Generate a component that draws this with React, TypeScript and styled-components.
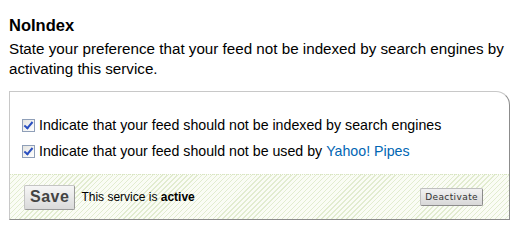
import React from "react";
import styled, { createGlobalStyle } from "styled-components";

const GlobalStyle = createGlobalStyle`
  html, body {
    margin: 0;
    padding: 0;
    background: #ffffff;
  }
  body {
    font-family: "Liberation Sans", Arial, sans-serif;
    color: #000;
  }
`;

function App() {
  return (
    <Page>
      <GlobalStyle />
      <Title>NoIndex</Title>
      <Description>
        State your preference that your feed not be indexed by search engines by
        activating this service.
      </Description>
      <Panel>
        <Options>
          <OptionRow>
            <Checkbox type="checkbox" defaultChecked />
            Indicate that your feed should not be indexed by search engines
          </OptionRow>
          <OptionRow>
            <Checkbox type="checkbox" defaultChecked />
            Indicate that your feed should not be used by
            <Link href="#">Yahoo! Pipes</Link>
          </OptionRow>
        </Options>
        <Footer>
          <SaveButton type="button">Save</SaveButton>
          <Status>
            This service is <b>active</b>
          </Status>
          <DeactivateButton type="button">Deactivate</DeactivateButton>
        </Footer>
      </Panel>
    </Page>
  );
}

const Page = styled.div`
  padding: 15px 8px 0 9px;
  width: 517px;
  box-sizing: border-box;
`;

const Title = styled.h2`
  margin: 0;
  font-size: 16.5px;
  font-weight: bold;
  line-height: 20px;
`;

const Description = styled.p`
  margin: 4px 0 0;
  font-size: 15.2px;
  line-height: 20px;
`;

const Panel = styled.div`
  margin-top: 12px;
  width: 501px;
  box-sizing: border-box;
  border: 1px solid #c8c8c8;
  border-right-color: #8c8c8c;
  border-bottom-color: #8c8c8c;
  border-top-right-radius: 14px;
  overflow: hidden;
`;

const Options = styled.div`
  display: flex;
  flex-direction: column;
  gap: 6px;
  padding: 23px 12px 13px;
`;

const OptionRow = styled.label`
  display: flex;
  align-items: center;
  font-size: 14.2px;
  line-height: 20px;
  white-space: nowrap;
`;

const Checkbox = styled.input`
  appearance: none;
  position: relative;
  width: 13px;
  height: 13px;
  margin: 0 4px 0 0;
  border: 1px solid #8f9fb8;
  background: linear-gradient(135deg, #e4e4e0, #ffffff);
  box-sizing: border-box;

  &:checked::after {
    content: "";
    position: absolute;
    left: 3px;
    top: 0px;
    width: 3px;
    height: 7px;
    border: solid #2a4fc0;
    border-width: 0 2px 2px 0;
    transform: rotate(40deg);
  }
`;

const Link = styled.a`
  color: #0066b3;
  text-decoration: none;
  margin-left: 4px;
`;

const Footer = styled.div`
  display: flex;
  align-items: center;
  height: 44px;
  padding: 0 26px 0 14px;
  border-top: 1px dotted #d8e4c0;
  background: repeating-linear-gradient(
    -45deg,
    #fafcf5 0px,
    #fafcf5 2.5px,
    #e2ecd0 2.5px,
    #e2ecd0 3.5px
  );
`;

const SaveButton = styled.button`
  font-family: "Liberation Sans", Arial, sans-serif;
  font-size: 16px;
  font-weight: bold;
  color: #444;
  height: 25px;
  padding: 0 5px;
  border: 1px solid #c4c4c4;
  border-right-color: #9a9a9a;
  border-bottom-color: #9a9a9a;
  border-radius: 2px;
  background: linear-gradient(#f6f6f6, #dadada);
  letter-spacing: 0.5px;
`;

const Status = styled.span`
  margin-left: 6px;
  font-size: 12px;
  flex: 1;
`;

const DeactivateButton = styled.button`
  font-family: "DejaVu Sans", Tahoma, sans-serif;
  font-size: 9px;
  color: #333;
  height: 18px;
  padding: 0 4px;
  border: 1px solid #c0c0c0;
  border-right-color: #8c8c8c;
  border-bottom-color: #8c8c8c;
  border-radius: 2px;
  background: linear-gradient(#f2f2f2, #d8d8d8);
  letter-spacing: 0.4px;
`;

export default App;
